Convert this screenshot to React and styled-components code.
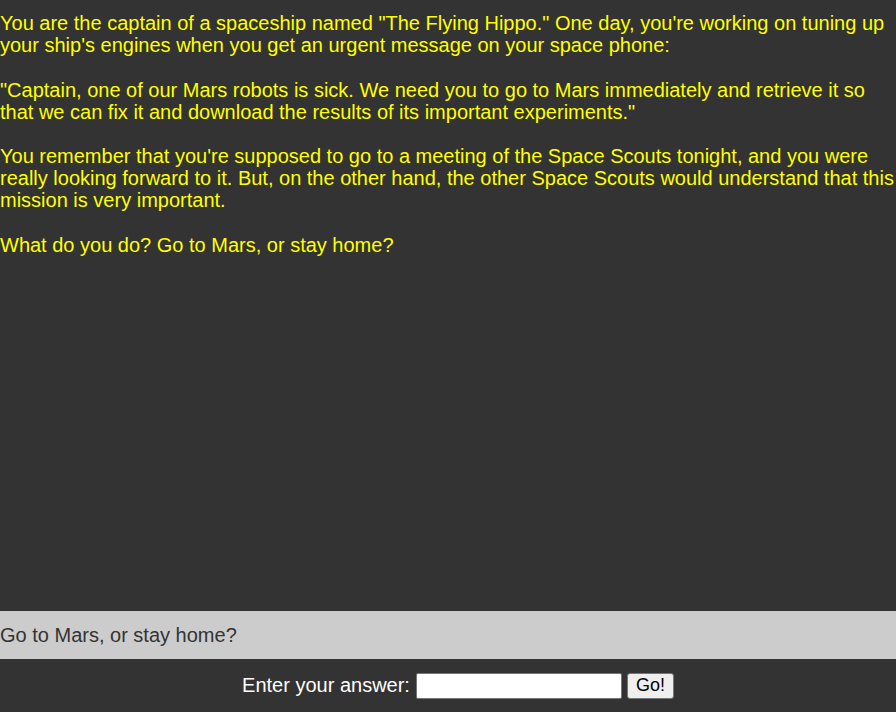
import React from "react";
import styled, { createGlobalStyle } from "styled-components";

const Global = createGlobalStyle`
  html, body { margin: 0; padding: 0; background: #ffffff; }
  body { font-family: "Liberation Sans", Arial, sans-serif; }
`;

const Page = styled.div`
  height: 712px;
  background: #333333;
  display: flex;
  flex-direction: column;
`;

const Story = styled.div`
  flex: 1;
  color: #ffff00;
  font-size: 20px;
  line-height: 22px;
  padding-top: 12px;
`;

const Para = styled.p`
  margin: 0 0 22.5px 0;
  line-height: 22px;
`;

const Prompt = styled.div`
  background: #cccccc;
  color: #333333;
  font-size: 20px;
  height: 48px;
  display: flex;
  align-items: center;
`;

const AnswerRow = styled.form`
  height: 53px;
  display: flex;
  align-items: center;
  justify-content: center;
  margin: 0;
  padding-left: 20px;
  color: #ffffff;
  font-size: 20px;
`;

const Label = styled.label`
  margin-right: 6px;
`;

const Input = styled.input`
  width: 200px;
  height: 22px;
  padding: 1px 2px;
  margin: 0 5px 0 0;
  border: 1px solid #767676;
  border-radius: 2px;
  background: #ffffff;
  font-family: "Liberation Sans", Arial, sans-serif;
  font-size: 16px;
  box-sizing: content-box;
`;

const GoButton = styled.button`
  height: 26px;
  width: 47px;
  padding: 0;
  border: 1px solid #767676;
  border-radius: 3px;
  background: #efefef;
  color: #000000;
  font-family: "Liberation Sans", Arial, sans-serif;
  font-size: 18px;
`;

export default function App() {
  return (
    <>
      <Global />
      <Page>
        <Story>
          <Para>
            You are the captain of a spaceship named "The Flying Hippo." One day, you're working on tuning up your ship's engines when you get an urgent message on your space phone:
          </Para>
          <Para>
            "Captain, one of our Mars robots is sick. We need you to go to Mars immediately and retrieve it so that we can fix it and download the results of its important experiments."
          </Para>
          <Para>
            You remember that you're supposed to go to a meeting of the Space Scouts tonight, and you were really looking forward to it. But, on the other hand, the other Space Scouts would understand that this mission is very important.
          </Para>
          <Para>What do you do? Go to Mars, or stay home?</Para>
        </Story>
        <Prompt>Go to Mars, or stay home?</Prompt>
        <AnswerRow onSubmit={(e) => e.preventDefault()}>
          <Label htmlFor="answer">Enter your answer:</Label>
          <Input id="answer" type="text" />
          <GoButton type="submit">Go!</GoButton>
        </AnswerRow>
      </Page>
    </>
  );
}
